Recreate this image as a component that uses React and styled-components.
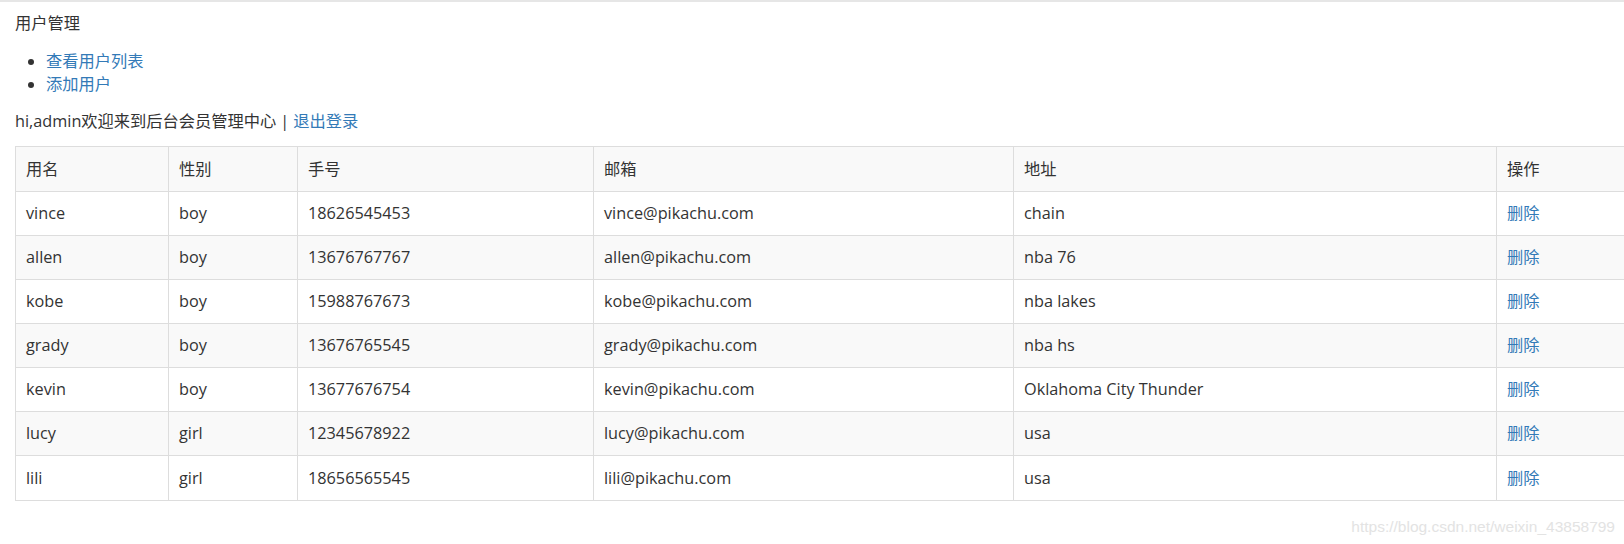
import React from "react";
import styled, { createGlobalStyle } from "styled-components";

const Global = createGlobalStyle`
  html, body { margin: 0; padding: 0; background: #fff; overflow: hidden; }
  body {
    font-family: "Open Sans", "Noto Sans CJK SC", sans-serif;
    font-size: 16.25px;
    line-height: 22.86px;
    color: #333;
  }
`;

const Page = styled.div`
  position: relative;
  width: 1624px;
  height: 544px;
  border-top: 2px solid #e6e6e6;
  box-sizing: border-box;
  padding: 10px 0 0 15px;
`;

const Title = styled.div`
  margin: 0;
`;

const Menu = styled.ul`
  margin: 15px 0 14px 0;
  padding-left: 31px;
  list-style: disc;
`;

const Link = styled.a`
  color: #337ab7;
  text-decoration: none;
  cursor: pointer;
`;

const Welcome = styled.div`
  margin-bottom: 14px;
`;

const Sep = styled.span`
  padding: 0 4px;
`;

const Table = styled.table`
  border-collapse: collapse;
  table-layout: fixed;
  width: 1681px;
  border: 1px solid #ddd;
`;

const Row = styled.tr`
  background: ${(p) => (p.$striped ? "#f9f9f9" : "#fff")};
`;

const Cell = styled.td`
  border: 1px solid #ddd;
  padding: 10px;
  height: 23.15px;
  vertical-align: middle;
  white-space: nowrap;
`;

const Watermark = styled.div`
  position: absolute;
  right: 9px;
  bottom: 5px;
  font-family: "Liberation Sans", Arial, sans-serif;
  font-size: 15.5px;
  color: #e3e3e3;
`;

const widths = [153, 129, 296, 420, 483, 200];
const headers = ["用名", "性别", "手号", "邮箱", "地址", "操作"];
const users = [
  ["vince", "boy", "18626545453", "vince@pikachu.com", "chain"],
  ["allen", "boy", "13676767767", "allen@pikachu.com", "nba 76"],
  ["kobe", "boy", "15988767673", "kobe@pikachu.com", "nba lakes"],
  ["grady", "boy", "13676765545", "grady@pikachu.com", "nba hs"],
  ["kevin", "boy", "13677676754", "kevin@pikachu.com", "Oklahoma City Thunder"],
  ["lucy", "girl", "12345678922", "lucy@pikachu.com", "usa"],
  ["lili", "girl", "18656565545", "lili@pikachu.com", "usa"],
];

export default function App() {
  return (
    <>
      <Global />
      <Page>
        <Title>用户管理</Title>
        <Menu>
          <li><Link>查看用户列表</Link></li>
          <li><Link>添加用户</Link></li>
        </Menu>
        <Welcome>
          hi,admin欢迎来到后台会员管理中心<Sep>|</Sep><Link>退出登录</Link>
        </Welcome>
        <Table>
          <colgroup>
            {widths.map((w, i) => (
              <col key={i} style={{ width: w }} />
            ))}
          </colgroup>
          <tbody>
            <Row $striped>
              {headers.map((h) => (
                <Cell key={h}>{h}</Cell>
              ))}
            </Row>
            {users.map((u, i) => (
              <Row key={u[0]} $striped={i % 2 === 1}>
                {u.map((v, j) => (
                  <Cell key={j}>{v}</Cell>
                ))}
                <Cell><Link>删除</Link></Cell>
              </Row>
            ))}
          </tbody>
        </Table>
        <Watermark>https://blog.csdn.net/weixin_43858799</Watermark>
      </Page>
    </>
  );
}
